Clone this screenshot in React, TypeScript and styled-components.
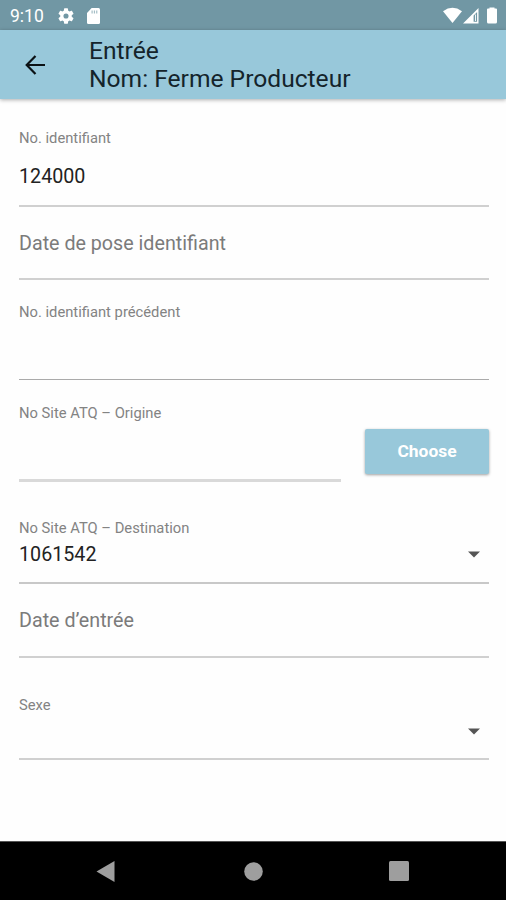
import React from "react";
import styled, { createGlobalStyle } from "styled-components";

const GlobalStyle = createGlobalStyle`
  * { box-sizing: border-box; }
  body { margin: 0; background: #fefefe; font-family: Roboto, "Liberation Sans", sans-serif; }
`;

const Screen = styled.div`
  display: flex;
  flex-direction: column;
  width: 506px;
  height: 900px;
  background: #fefefe;
  overflow: hidden;
`;

const StatusBar = styled.div`
  display: flex;
  align-items: center;
  height: 30px;
  padding: 1px 8px 0 10px;
  background: #7197a4;
  color: #fff;
`;

const Clock = styled.span`
  width: 48px;
  font-size: 17.5px;
  line-height: 20px;
`;

const StatusGroup = styled.div<{ $end?: boolean }>`
  display: flex;
  align-items: center;
  gap: ${(p) => (p.$end ? "0" : "13px")};
  margin-left: ${(p) => (p.$end ? "auto" : "0")};
  svg { display: block; }
`;

const AppBar = styled.header`
  display: flex;
  align-items: center;
  height: 69px;
  flex: none;
  padding-left: 25px;
  background: #98c8da;
  box-shadow: 0 1px 4px rgba(0, 0, 0, 0.32);
`;

const BackButton = styled.button`
  display: flex;
  width: 64px;
  padding: 0;
  border: 0;
  background: none;
`;

const Title = styled.h1`
  margin: 1px 0 0;
  font-size: 24.6px;
  font-weight: 400;
  line-height: 28px;
  color: #14242b;
`;

const Form = styled.main`
  display: flex;
  flex-direction: column;
  flex: 1;
  padding: 0 17px 0 19px;
`;

const Field = styled.div<{ $height: number; $top: number; $line?: string; $thick?: number }>`
  display: flex;
  flex-direction: column;
  flex: none;
  height: ${(p) => p.$height}px;
  padding-top: ${(p) => p.$top}px;
  border-bottom: ${(p) => p.$thick ?? 2}px solid ${(p) => p.$line ?? "#d0d0d0"};
`;

const Label = styled.label`
  font-size: 14.75px;
  line-height: 18px;
  color: #838383;
`;

const Value = styled.span<{ $gap?: number }>`
  margin-top: ${(p) => p.$gap ?? 0}px;
  font-size: 19.7px;
  line-height: 24px;
  color: #222;
`;

const Placeholder = styled.span`
  font-size: 19.7px;
  line-height: 24px;
  color: #7b7b7b;
`;

const SelectRow = styled.div`
  display: flex;
  align-items: center;
  justify-content: space-between;
  height: 24px;
  margin-top: 5px;
  padding-right: 9px;
`;

const SplitRow = styled.div`
  display: flex;
  justify-content: space-between;
  > :first-child { width: 322px; }
`;

const ChooseButton = styled.button`
  width: 124px;
  height: 45px;
  margin-top: 49px;
  padding: 0;
  border: 0;
  border-radius: 2px;
  background: #98c8da;
  box-shadow: 0 1px 3px rgba(0, 0, 0, 0.38);
  color: #fff;
  font: 700 17.4px/45px Roboto, sans-serif;
`;

const NavBar = styled.nav`
  display: flex;
  align-items: center;
  height: 59px;
  flex: none;
  padding: 0 97px 0 96px;
  justify-content: space-between;
  background: #000;
  border-top: 1px solid #555;
  svg { display: block; fill: #9e9e9e; }
`;

const Caret = () => (
  <svg width="12" height="7" viewBox="0 0 12 7"><path d="M0 .5h12L6 6.5z" fill="#555" /></svg>
);

export default function App() {
  return (
    <Screen>
      <GlobalStyle />
      <StatusBar>
        <Clock>9:10</Clock>
        <StatusGroup>
          <svg width="16" height="16" viewBox="2.5 2 19 20" fill="#fff">
            <path d="M19.14 12.94c.04-.3.06-.61.06-.94s-.02-.64-.07-.94l2.03-1.58a.49.49 0 0 0 .12-.61l-1.92-3.32a.49.49 0 0 0-.59-.22l-2.39.96a7 7 0 0 0-1.62-.94L14.4 2.81a.48.48 0 0 0-.48-.41h-3.84a.48.48 0 0 0-.47.41l-.36 2.54c-.59.24-1.13.57-1.62.94l-2.39-.96a.49.49 0 0 0-.59.22L2.74 8.87a.48.48 0 0 0 .12.61l2.03 1.58c-.05.3-.09.63-.09.94s.02.64.07.94l-2.03 1.58a.49.49 0 0 0-.12.61l1.92 3.32c.12.22.37.29.59.22l2.39-.96c.5.38 1.03.7 1.62.94l.36 2.54c.05.24.24.41.48.41h3.84c.24 0 .44-.17.47-.41l.36-2.54c.59-.24 1.13-.56 1.62-.94l2.39.96c.22.08.47 0 .59-.22l1.92-3.32a.48.48 0 0 0-.12-.61zM12 15.2a3.2 3.2 0 1 1 0-6.4 3.2 3.2 0 0 1 0 6.4z" />
          </svg>
          <svg width="13" height="16" viewBox="0 0 14 16" preserveAspectRatio="none">
            <path d="M5 0h7.5Q14 0 14 1.5v13q0 1.5-1.5 1.5h-11Q0 16 0 14.5V5z" fill="#fff" />
            <path d="M5.5 2.5v3M8 2.5v3M10.5 2.5v3" stroke="#a5bec6" strokeWidth="1.3" />
          </svg>
        </StatusGroup>
        <StatusGroup $end>
          <svg width="55" height="17" viewBox="443 6 55 17" fill="#fff">
            <path d="M443 10.2Q452.500 3.400 462 10.200L452.500 22z" />
            <path fillRule="evenodd" d="M463 22.500L478.500 7v15.500zM473.600 14.500v6.300h3.500V11z" />
            <path d="M475.500 13.500v6.500" stroke="#fff" strokeWidth="0.900" />
            <path d="M487 8.500Q487 7.500 488 7.500H489.500V6.500H494.500V7.500H496Q497 7.500 497 8.500V21Q497 22.500 495.500 22.500H488.500Q487 22.500 487 21z" />
          </svg>
        </StatusGroup>
      </StatusBar>
      <AppBar>
        <BackButton aria-label="Retour">
          <svg width="21" height="20" viewBox="0 0 21 20" fill="none" stroke="#0b1215" strokeWidth="2.200">
            <path d="M20 10H2M10.500 1L1.700 10l8.800 9" />
          </svg>
        </BackButton>
        <Title>Entrée<br />Nom: Ferme Producteur</Title>
      </AppBar>
      <Form>
        <Field $height={108} $top={30}>
          <Label>No. identifiant</Label>
          <Value $gap={18}>124000</Value>
        </Field>
        <Field $height={73} $top={25}>
          <Placeholder>Date de pose identifiant</Placeholder>
        </Field>
        <Field $height={100} $top={23} $line="#aaa" $thick={1}>
          <Label>No. identifiant précédent</Label>
        </Field>
        <SplitRow>
          <Field $height={102} $top={24} $line="#d9d9d9" $thick={3}>
            <Label>No Site ATQ – Origine</Label>
          </Field>
          <ChooseButton>Choose</ChooseButton>
        </SplitRow>
        <Field $height={102} $top={37} $line="#c8c8c8">
          <Label>No Site ATQ – Destination</Label>
          <SelectRow><Value $gap={2}>1061542</Value><Caret /></SelectRow>
        </Field>
        <Field $height={74} $top={25}>
          <Placeholder>Date d’entrée</Placeholder>
        </Field>
        <Field $height={102} $top={38}>
          <Label>Sexe</Label>
          <SelectRow><Value /><Caret /></SelectRow>
        </Field>
      </Form>
      <NavBar>
        <svg width="19" height="21" viewBox="0 0 19 21"><path d="M.5 10.500L18.500 0v21z" /></svg>
        <svg width="21" height="19" viewBox="0 0 21 19"><circle cx="11.500" cy="9.500" r="9.300" /></svg>
        <svg width="20" height="20" viewBox="0 0 20 20"><rect width="20" height="20" rx="1.500" /></svg>
      </NavBar>
    </Screen>
  );
}
